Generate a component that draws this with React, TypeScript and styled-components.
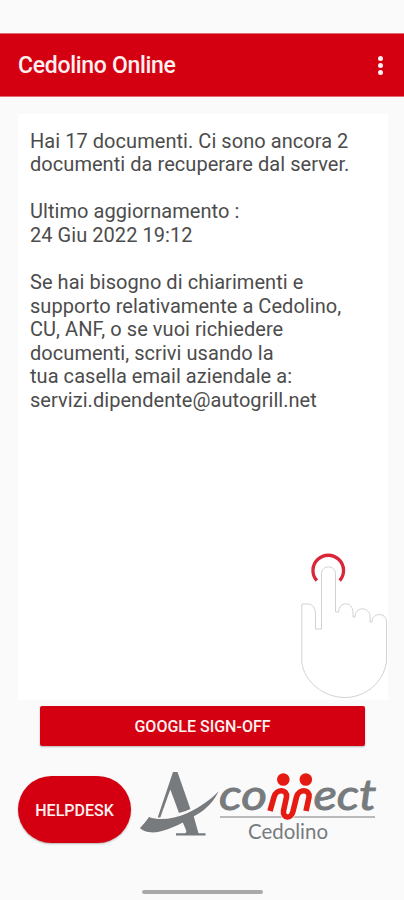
import React from "react";
import styled, { createGlobalStyle } from "styled-components";

const RED = "#d40011";
const GREY = "#777b7e";

const GlobalStyle = createGlobalStyle`
  * { box-sizing: border-box; }
  body {
    margin: 0;
    background: #fafafa;
    font-family: Roboto, "Liberation Sans", sans-serif;
  }
`;

const Screen = styled.div`
  position: relative;
  display: flex;
  flex-direction: column;
  width: 404px;
  height: 900px;
  overflow: hidden;
  background: #fafafa;
`;

const StatusBar = styled.div`
  height: 33px;
  flex: none;
`;

const AppBar = styled.header`
  display: flex;
  flex: none;
  align-items: center;
  justify-content: space-between;
  height: 64px;
  padding: 0 21px 0 18px;
  background: ${RED};
  border-top: 1px solid #e36a72;
  border-bottom: 1px solid #e36a72;
  color: #fff0f0;
`;

const Title = styled.h1`
  margin: 0;
  padding-top: 1px;
  font-size: 23px;
  line-height: 28px;
  font-weight: 500;
  letter-spacing: -0.3px;
  white-space: nowrap;
`;

const MenuButton = styled.button`
  display: flex;
  flex-direction: column;
  align-items: center;
  gap: 2px;
  padding: 0;
  border: 0;
  background: none;
`;

const Dot = styled.span`
  width: 5px;
  height: 5px;
  border-radius: 50%;
  background: #fff0f0;
`;

const Card = styled.main`
  flex: none;
  width: 370px;
  height: 586px;
  margin: 17px 0 0 18px;
  padding: 15.5px 0 0 12px;
  background: #fff;
`;

const Line = styled.div`
  height: 23.6px;
  line-height: 23.6px;
  font-size: 20px;
  letter-spacing: 0.05px;
  color: #4c4c4c;
  white-space: nowrap;
`;

const Actions = styled.div`
  display: flex;
  flex: none;
  padding: 6px 39px 0 40px;
`;

const SignOff = styled.button`
  width: 325px;
  height: 40px;
  padding: 2px 0 0;
  border: 0;
  border-radius: 2px;
  background: ${RED};
  box-shadow: 0 1px 2px rgba(0, 0, 0, 0.28);
  color: #fff0f0;
  font: 500 16px/38px Roboto, sans-serif;
`;

const Footer = styled.footer`
  display: flex;
  flex: none;
  height: 72px;
  margin-top: 24px;
  padding-left: 18px;
`;

const Helpdesk = styled.button`
  flex: none;
  width: 113px;
  height: 67px;
  margin-top: 6px;
  padding: 2px 0 0;
  border: 0;
  border-radius: 34px;
  background: ${RED};
  box-shadow: 0 1px 2px rgba(0, 0, 0, 0.28);
  color: #fff0f0;
  font: 500 16px/65px Roboto, sans-serif;
`;

const Logo = styled.svg`
  flex: none;
  width: 240px;
  height: 72px;
  margin-left: 7px;
`;

const NavBar = styled.nav`
  display: flex;
  flex: 1;
  align-items: flex-end;
  justify-content: center;
  padding: 0 0 6px 1px;
`;

const Handle = styled.div`
  width: 121px;
  height: 4px;
  border-radius: 2px;
  background: #a9a9a9;
`;

const TapHint = styled.svg`
  position: absolute;
  left: 298px;
  top: 550px;
  width: 92px;
  height: 152px;
`;

const lines = [
  "Hai 17 documenti. Ci sono ancora 2",
  "documenti da recuperare dal server.",
  "",
  "Ultimo aggiornamento :",
  "24 Giu 2022 19:12",
  "",
  "Se hai bisogno di chiarimenti e",
  "supporto relativamente a Cedolino,",
  "CU, ANF, o se vuoi richiedere",
  "documenti, scrivi usando la",
  "tua casella email aziendale a:",
  "servizi.dipendente@autogrill.net",
];

const figures =
  "M270 811L274 797C276.500 788.500 287.500 789 286.500 797L283.500 811C282.500 819 291.500 818.500 292.800 812L296.500 797C299 788.500 310 789 309 797L306 811";

function ConnectLogo() {
  return (
    <Logo viewBox="138 770 240 72" aria-label="A connect Cedolino">
      <g fill={GREY}>
        <path d="M173 772H177.500L190.400 809Q185 811.700 179 813.100L170.300 789.500L160.300 817.500H157.700Z" />
        <path d="M140 828C143.500 824.500 146.500 820.500 149 817C159 821 174 819 187 813.300C201 807 211 799 218.500 791.500C214 801 206 809.500 197 814.500C184 822 171 829.500 158 832C150 833.300 143 831.500 140 828Z" />
        <path d="M182 820.500L193.500 815.500L198.500 833.300H205.500V835.500H176V833.300H184C186.500 833.300 186.500 832 186 830Z" />
      </g>
      <g fill={GREY} stroke={GREY} strokeWidth="0.9" fontFamily="Lato, sans-serif" fontStyle="italic" fontWeight="400">
        <text x="219" y="810.300" fontSize="42" textLength="48" lengthAdjust="spacingAndGlyphs">co</text>
        <text x="313.500" y="810.300" fontSize="42" textLength="63" lengthAdjust="spacingAndGlyphs">ect</text>
      </g>
      <path d="M220 817H375" stroke={GREY} strokeWidth="1.200" />
      <path d={figures} fill="none" stroke="#fafafa" strokeWidth="6.800" />
      <path d={figures} fill="none" stroke="#e51b13" strokeWidth="5.600" />
      <circle cx="283.300" cy="779.500" r="6.300" fill="#e51b13" />
      <circle cx="305.800" cy="779.500" r="6.300" fill="#e51b13" />
      <text x="248" y="838.500" fill={GREY} fontFamily="Lato, sans-serif" fontSize="21.500" textLength="80" lengthAdjust="spacingAndGlyphs">Cedolino</text>
    </Logo>
  );
}

export default function App() {
  return (
    <>
      <GlobalStyle />
      <Screen>
        <StatusBar />
        <AppBar>
          <Title>Cedolino Online</Title>
          <MenuButton aria-label="Menu"><Dot /><Dot /><Dot /></MenuButton>
        </AppBar>
        <Card>
          {lines.map((text, i) => <Line key={i}>{text}</Line>)}
        </Card>
        <Actions><SignOff>GOOGLE SIGN-OFF</SignOff></Actions>
        <Footer>
          <Helpdesk>HELPDESK</Helpdesk>
          <ConnectLogo />
        </Footer>
        <NavBar><Handle /></NavBar>
        <TapHint viewBox="298 550 92 152" fill="none">
          <path
            d="M301.800 604H308C313 604 315.500 609 315.500 614V629H321.500V574C321.500 564.500 335.500 564.500 335.500 574V612H338.500C339 601.500 352 600.500 353 612V617H355C355 606.500 368 606.500 370 615V622H372C372 612 386.500 612 386.500 622V662C383 684 364 697.500 345 697.500C324 697.500 304 682 301.800 662Z"
            fill="#fff" stroke="#d2d2d2"
          />
          <path d="M316.800 580.700A15.300 15.300 0 1 1 339.700 580.700" stroke="#d92638" strokeWidth="3.300" />
        </TapHint>
      </Screen>
    </>
  );
}
